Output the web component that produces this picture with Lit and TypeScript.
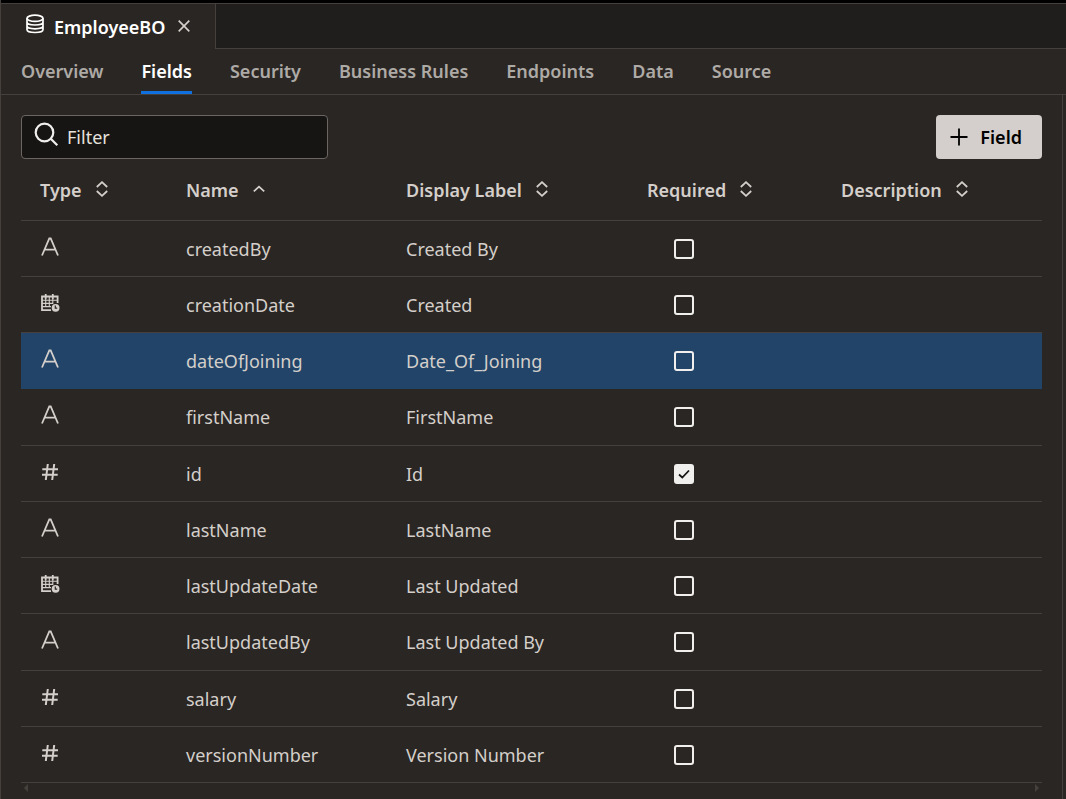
import { LitElement, html, css, svg } from "lit";
import { customElement, state } from "lit/decorators.js";
import { classMap } from "lit/directives/class-map.js";

type FieldType = "text" | "date" | "number";

interface Field {
  type: FieldType;
  name: string;
  label: string;
  required?: boolean;
}

const SECTIONS = ["Overview", "Fields", "Security", "Business Rules", "Endpoints", "Data", "Source"];

const COLUMNS = [
  { id: "type", label: "Type" },
  { id: "name", label: "Name" },
  { id: "label", label: "Display Label" },
  { id: "required", label: "Required" },
  { id: "description", label: "Description" },
];

const FIELDS: Field[] = [
  { type: "text", name: "createdBy", label: "Created By" },
  { type: "date", name: "creationDate", label: "Created" },
  { type: "text", name: "dateOfJoining", label: "Date_Of_Joining" },
  { type: "text", name: "firstName", label: "FirstName" },
  { type: "number", name: "id", label: "Id", required: true },
  { type: "text", name: "lastName", label: "LastName" },
  { type: "date", name: "lastUpdateDate", label: "Last Updated" },
  { type: "text", name: "lastUpdatedBy", label: "Last Updated By" },
  { type: "number", name: "salary", label: "Salary" },
  { type: "number", name: "versionNumber", label: "Version Number" },
];

const TYPE_SHAPES = {
  text: svg`<path d="M2 18.5 L9.3 1.5 H10.7 L18 18.5 M5 12.7 H15" stroke-width="1.8" />`,
  date: svg`
    <path d="M11 17.2 H2 V3.5 H17.6 V10" stroke-width="1.8" />
    <path d="M5.7 1 V6 M12.8 1 V6" stroke-width="1.8" />
    <path d="M2 7.3 H17.5 M2 10.4 H12.5 M2 13.6 H11 M5.7 6 V14 M9.3 4 V14 M12.8 6 V11" stroke-width="1.1" />
    <circle cx="15.6" cy="14.8" r="3.9" fill="currentColor" stroke="none" />
    <path d="M15.3 12.6 V15.2 H17.2" stroke="#2a2623" stroke-width="1.2" />`,
  number: svg`<path d="M7.8 2 L5.8 18 M14.2 2 L12.2 18 M2.3 7.2 H18 M2 12.8 H17.7" stroke-width="2" />`,
};

@customElement("app-root")
export class AppRoot extends LitElement {
  @state() private section = "Fields";
  @state() private selected = "dateOfJoining";
  @state() private sortedBy = "name";

  static styles = css`
    :host {
      display: block;
      font-family: "Noto Sans", "Open Sans", sans-serif;
      font-size: 18px;
      line-height: 24px;
      color: #d4cfca;
      background: #2a2623;
    }
    * {
      box-sizing: border-box;
    }
    button {
      font: inherit;
      color: inherit;
      background: none;
      border: 0;
      padding: 0;
      cursor: pointer;
    }
    svg {
      display: block;
      flex: none;
      fill: none;
      stroke: currentColor;
    }
    .shell {
      min-height: 100vh;
      display: flex;
      flex-direction: column;
      border-left: 1px solid #45403c;
    }
    .files {
      display: flex;
      height: 49px;
      border-top: 3px solid #000;
      background: #201e1c;
    }
    .file {
      display: flex;
      align-items: center;
      width: 215px;
      padding: 0 24px;
      background: #2a2623;
      border-top: 1px solid #45403c;
      border-right: 1px solid #45403c;
      color: #fff;
      font-weight: 600;
    }
    .file-name {
      margin: 0 13px 0 9px;
    }
    .db {
      margin-bottom: 6px;
    }
    .rest {
      flex: 1;
      border-top: 1px solid #45403c;
      border-bottom: 1px solid #45403c;
    }
    .close {
      padding-bottom: 2px;
      color: #d4cfca;
    }
    .sections {
      display: flex;
      gap: 38px;
      height: 46px;
      padding-left: 20px;
      border-bottom: 1px solid #45403c;
    }
    .section {
      padding: 10px 0 8px;
      border-bottom: 3px solid transparent;
      color: #aeaaa6;
      font-weight: 600;
      text-decoration: none;
      white-space: nowrap;
    }
    .section.current {
      color: #fff;
      border-color: #1070e0;
    }
    .panel {
      flex: 1;
      margin-right: 3px;
      padding: 20px 20px 0;
      border-right: 1px solid #45403c;
    }
    .tools {
      display: flex;
      justify-content: space-between;
      height: 44px;
    }
    .filter {
      display: flex;
      align-items: center;
      gap: 8px;
      width: 307px;
      padding: 0 12px;
      border: 1px solid #6b6663;
      border-radius: 4px;
      background: #161513;
      color: #f1efed;
    }
    .filter svg {
      margin-bottom: 6px;
    }
    .filter input {
      flex: 1;
      min-width: 0;
      padding: 0;
      border: 0;
      outline: 0;
      background: none;
      font: inherit;
      color: inherit;
    }
    .filter input::placeholder {
      color: #e6e2de;
      opacity: 1;
    }
    .add {
      display: flex;
      align-items: center;
      gap: 12px;
      padding: 0 20px 0 14px;
      border-radius: 4px;
      background: #d4cfcc;
      color: #000;
      font-weight: 600;
    }
    .grid {
      width: 100%;
      height: 624px;
      border-collapse: collapse;
      table-layout: fixed;
    }
    .col-type {
      width: 145px;
    }
    .col-name {
      width: 220px;
    }
    .col-label {
      width: 241px;
    }
    .col-required {
      width: 194px;
    }
    th,
    td {
      height: 56px;
      padding: 1px 0 0 20px;
      border-bottom: 1px solid #45403c;
      text-align: left;
      white-space: nowrap;
    }
    th {
      height: 61px;
      font-weight: 600;
    }
    th:first-child,
    td:first-child {
      padding-left: 19px;
    }
    .sort {
      display: flex;
      align-items: center;
      gap: 14px;
    }
    .sort svg {
      margin-bottom: 2px;
    }
    .kind svg {
      margin-bottom: 4px;
    }
    .need {
      padding-left: 47px;
    }
    .selected td {
      background: #224469;
      border-color: #224469;
    }
    .tick {
      display: block;
      appearance: none;
      width: 20px;
      height: 20px;
      margin: 0;
      border: 2px solid #f1efed;
      border-radius: 3px;
    }
    .tick:checked {
      background: #f1efed
        url("data:image/svg+xml,%3Csvg xmlns='http://www.w3.org/2000/svg' viewBox='0 0 16 16'%3E%3Cpath d='M3 8.5L6.3 11.5L13 4.5' fill='none' stroke='%23161513' stroke-width='1.8'/%3E%3C/svg%3E")
        center / 16px 16px no-repeat;
    }
    .scroll {
      display: flex;
      justify-content: space-between;
      padding: 1px 2px 0;
      color: #45403c;
    }
    .scroll svg {
      fill: currentColor;
      stroke: none;
    }
  `;

  private sortIcon(id: string) {
    return html`<svg width="12" height="16" viewBox="0 0 12 16" stroke-width="1.8" aria-hidden="true">
      ${id === this.sortedBy
        ? svg`<path d="M0.8 10.4 L6 5.6 L11.2 10.4" />`
        : svg`<path d="M0.8 6 L6 1.2 L11.2 6 M0.8 10 L6 14.8 L11.2 10" />`}
    </svg>`;
  }

  private row(f: Field) {
    return html`<tr
      class=${classMap({ selected: f.name === this.selected })}
      @click=${() => (this.selected = f.name)}
    >
      <td class="kind">
        <svg width="20" height="20" viewBox="0 0 20 20" role="img" aria-label=${f.type}>${TYPE_SHAPES[f.type]}</svg>
      </td>
      <td>${f.name}</td>
      <td>${f.label}</td>
      <td class="need">
        <input class="tick" type="checkbox" aria-label="${f.name} required" .checked=${!!f.required} />
      </td>
      <td></td>
    </tr>`;
  }

  render() {
    return html`<div class="shell">
      <header class="files">
        <div class="file">
          <svg class="db" width="20" height="20" viewBox="0 0 20 20" stroke-width="1.7" aria-hidden="true">
            <ellipse cx="10" cy="4.3" rx="8" ry="3.1" />
            <path d="M2 4.3 V15.5 C2 19.5 18 19.5 18 15.5 V4.3 M2 8 C2 12 18 12 18 8 M2 11.8 C2 15.8 18 15.8 18 11.8" />
          </svg>
          <span class="file-name">EmployeeBO</span>
          <button class="close" aria-label="Close">
            <svg width="12" height="12" viewBox="0 0 12 12" stroke-width="1.7"><path d="M0.7 0.7 L11.3 11.3 M11.3 0.7 L0.7 11.3" /></svg>
          </button>
        </div>
        <div class="rest"></div>
      </header>
      <nav class="sections">
        ${SECTIONS.map(
          (s) => html`<a
            href="#"
            class=${classMap({ section: true, current: s === this.section })}
            @click=${(e: Event) => {
              e.preventDefault();
              this.section = s;
            }}
            >${s}</a
          >`
        )}
      </nav>
      <main class="panel">
        <div class="tools">
          <label class="filter">
            <svg width="25" height="25" viewBox="0 0 25 25" stroke-width="2.2" aria-hidden="true">
              <circle cx="10.5" cy="10.5" r="8.8" />
              <path d="M16.8 16.8 L23.3 23.3" />
            </svg>
            <input type="text" placeholder="Filter" aria-label="Filter" />
          </label>
          <button class="add">
            <svg width="18" height="18" viewBox="0 0 18 18" stroke-width="1.8" aria-hidden="true">
              <path d="M9 0.5 V17.5 M0.5 9 H17.5" />
            </svg>
            Field
          </button>
        </div>
        <table class="grid">
          <colgroup>
            ${COLUMNS.map((c) => html`<col class="col-${c.id}" />`)}
          </colgroup>
          <thead>
            <tr>
              ${COLUMNS.map(
                (c) => html`<th scope="col">
                  <button class="sort" @click=${() => (this.sortedBy = c.id)}>${c.label}${this.sortIcon(c.id)}</button>
                </th>`
              )}
            </tr>
          </thead>
          <tbody>
            ${FIELDS.map((f) => this.row(f))}
          </tbody>
        </table>
        <div class="scroll" aria-hidden="true">
          <svg width="5" height="8" viewBox="0 0 5 8"><path d="M5 0 V8 L1 4 Z" /></svg>
          <svg width="5" height="8" viewBox="0 0 5 8"><path d="M0 0 V8 L4 4 Z" /></svg>
        </div>
      </main>
    </div>`;
  }
}
